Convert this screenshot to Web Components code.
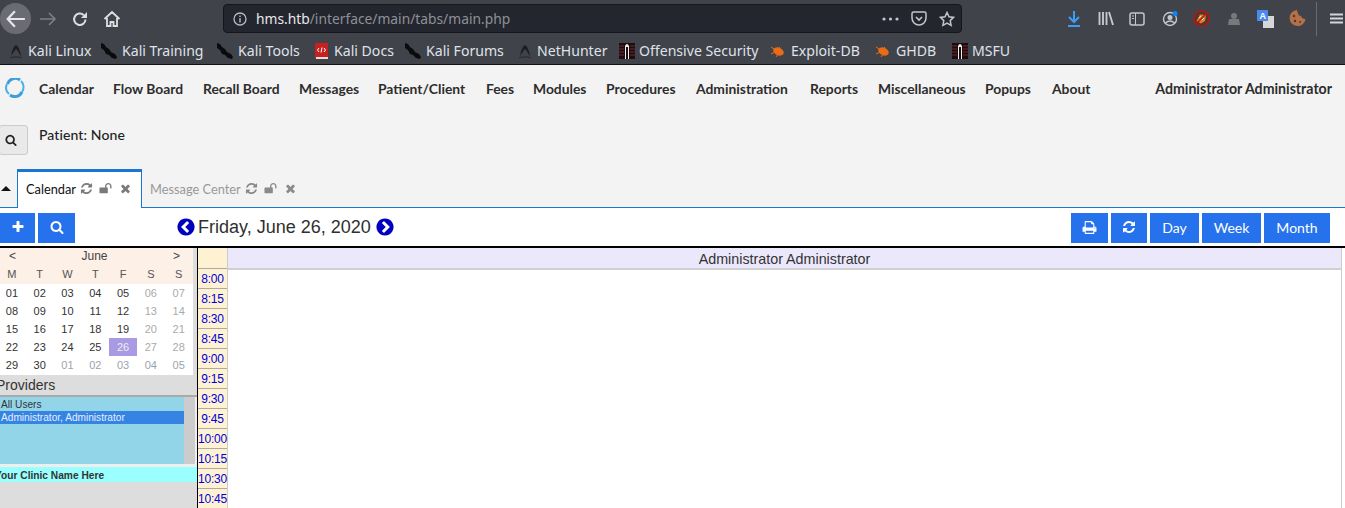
<!DOCTYPE html>
<html>
<head>
<meta charset="utf-8">
<title>OpenEMR</title>
<style>
html,body{margin:0;padding:0;height:508px;overflow:hidden;background:#fff;}
body{font-family:"Liberation Sans",sans-serif;}
</style>
</head>
<body>
<browser-bar></browser-bar>
<bookmark-bar>
  <book-mark icon="kali" w="92" gap="4">Kali Linux</book-mark>
  <book-mark icon="sword" w="116" gap="4">Kali Training</book-mark>
  <book-mark icon="sword" w="98" gap="4">Kali Tools</book-mark>
  <book-mark icon="docs" w="90" gap="5">Kali Docs</book-mark>
  <book-mark icon="sword" w="113" gap="4">Kali Forums</book-mark>
  <book-mark icon="kali" w="102" gap="4">NetHunter</book-mark>
  <book-mark icon="offsec" w="151" gap="4">Offensive Security</book-mark>
  <book-mark icon="bug" w="105" gap="6">Exploit-DB</book-mark>
  <book-mark icon="bug" w="77" gap="6">GHDB</book-mark>
  <book-mark icon="offsec" w="70" gap="4">MSFU</book-mark>
</bookmark-bar>
<emr-menu></emr-menu>
<patient-bar></patient-bar>
<emr-tabs></emr-tabs>
<cal-toolbar></cal-toolbar>
<cal-body>
  <cal-side slot="side"></cal-side>
  <day-view slot="main"></day-view>
</cal-body>

<script>
const FA = {
  search: "M1216 832q0-185-131.5-316.5t-316.5-131.5-316.5 131.5-131.5 316.5 131.5 316.5 316.5 131.5 316.5-131.5 131.5-316.5zm512 832q0 52-38 90t-90 38q-54 0-90-38l-343-342q-179 124-399 124-143 0-273.5-55.5t-225-150-150-225-55.5-273.5 55.5-273.5 150-225 225-150 273.5-55.5 273.5 55.5 225 150 150 225 55.5 273.5q0 220-124 399l343 343q37 37 37 90z",
  times: "M1490 1322q0 40-28 68l-136 136q-28 28-68 28t-68-28l-294-294-294 294q-28 28-68 28t-68-28l-136-136q-28-28-28-68t28-68l294-294-294-294q-28-28-28-68t28-68l136-136q28-28 68-28t68 28l294 294 294-294q28-28 68-28t68 28l136 136q28 28 28 68t-28 68l-294 294 294 294q28 28 28 68z",
  plus: "M1600 736v192q0 40-28 68t-68 28h-416v416q0 40-28 68t-68 28h-192q-40 0-68-28t-28-68v-416h-416q-40 0-68-28t-28-68v-192q0-40 28-68t68-28h416v-416q0-40 28-68t68-28h192q40 0 68 28t28 68v416h416q40 0 68 28t28 68z",
  refresh: "M1639 1056q0 5-1 7-64 268-268 434.5t-478 166.5q-146 0-282.5-55t-243.5-157l-129 129q-19 19-45 19t-45-19-19-45v-448q0-26 19-45t45-19h448q26 0 45 19t19 45-19 45l-137 137q71 66 161 102t187 36q134 0 250-65t186-179q11-17 53-117 8-23 30-23h192q13 0 22.5 9.5t9.5 22.5zm25-800v448q0 26-19 45t-45 19h-448q-26 0-45-19t-19-45 19-45l138-138q-148-137-349-137-134 0-250 65t-186 179q-11 17-53 117-8 23-30 23h-199q-13 0-22.5-9.5t-9.5-22.5v-7q65-268 270-434.5t480-166.5q146 0 284 55.5t245 156.5l130-129q19-19 45-19t45 19 19 45z",
  unlock: "M1728 576v256q0 26-19 45t-45 19h-64q-26 0-45-19t-19-45v-256q0-106-75-181t-181-75-181 75-75 181v192h96q40 0 68 28t28 68v576q0 40-28 68t-68 28h-960q-40 0-68-28t-28-68v-576q0-40 28-68t68-28h672v-192q0-185 131.5-316.5t316.5-131.5 316.5 131.5 131.5 316.5z",
  print: "M448 1536h896v-256h-896v256zm0-640h896v-384h-160q-40 0-68-28t-28-68v-160h-640v640zm1152 64q0-26-19-45t-45-19-45 19-19 45 19 45 45 19 45-19 19-45zm128 0v416q0 13-9.5 22.5t-22.5 9.5h-224v160q0 40-28 68t-68 28h-960q-40 0-68-28t-28-68v-160h-224q-13 0-22.5-9.5t-9.5-22.5v-416q0-79 56.5-135.5t135.5-56.5h64v-544q0-40 28-68t68-28h672q40 0 88 20t76 48l152 152q28 28 48 76t20 88v256h64q79 0 135.5 56.5t56.5 135.5z",
  left: "M1037 1395l102-102q19-19 19-45t-19-45l-307-307 307-307q19-19 19-45t-19-45l-102-102q-19-19-45-19t-45 19l-454 454q-19 19-19 45t19 45l454 454q19 19 45 19t45-19zm627-499q0 209-103 385.5t-279.5 279.5-385.5 103-385.5-103-279.5-279.5-103-385.5 103-385.5 279.5-279.5 385.5-103 385.5 103 279.5 279.5 103 385.5z",
  right: "M845 1395l454-454q19-19 19-45t-19-45l-454-454q-19-19-45-19t-45 19l-102 102q-19 19-19 45t19 45l307 307-307 307q-19 19-19 45t19 45l102 102q19 19 45 19t45-19zm819-499q0 209-103 385.5t-279.5 279.5-385.5 103-385.5-103-279.5-279.5-103-385.5 103-385.5 279.5-279.5 385.5-103 385.5 103 279.5 279.5 103 385.5z"
};
function fa(name, size, color) {
  return `<svg width="${size}" height="${size}" viewBox="0 0 1792 1792" style="display:block;flex:none"><path fill="${color}" d="${FA[name]}"/></svg>`;
}

const BOOK_ICONS = {
  kali: `<svg width="16" height="16" viewBox="0 0 16 16"><path d="M2 15c2-1 4-1 6-1s4 0 6 1" stroke="#23252a" fill="none"/><path d="M3 13c1-5 2-9 5-11 3 2 4 6 5 11-2-2-3-6-5-7-1 1-3 4-5 7z" fill="#1c1d21"/></svg>`,
  sword: `<svg width="18" height="16" viewBox="0 0 18 16"><path d="M1 0l3 1 2 3 3 2 2 3 4 2 2 3-1 2-4-1-3-3-3-1-2-4-3-2z" fill="#0b0b0d"/></svg>`,
  docs: `<svg width="15" height="16" viewBox="0 0 15 16"><rect x="1" y="0" width="13" height="15" rx="1" fill="#c8201f"/><rect x="2" y="14" width="12" height="2" fill="#e8dcdc"/><path d="M5 5L3.500 7 5 9M10 5l1.500 2L10 9M8 4.500L7 9.500" stroke="#fff" fill="none"/></svg>`,
  offsec: `<svg width="16" height="16" viewBox="0 0 16 16"><rect width="16" height="16" fill="#1d0d0f"/><path d="M0 3h5M0 6h5M0 9h5M0 12h5M11 3h5M11 6h5M11 9h5M11 12h5" stroke="#6e2a2c"/><path d="M6 16V3q2-4 4 0v13H9V4H7v12z" fill="#eee"/></svg>`,
  bug: `<svg width="15" height="14" viewBox="0 0 15 14"><ellipse cx="8.500" cy="7.500" rx="5.500" ry="3.800" transform="rotate(25 8.500 7.500)" fill="#ea6a16"/><path d="M1 3l4 2.500M1 10l4-2M6 13l2-3M10 3L8 5" stroke="#ea6a16"/></svg>`
};

class BrowserBar extends HTMLElement {
  constructor() {
    super();
    this.attachShadow({ mode: "open" });
    this.shadowRoot.innerHTML = `
<style>
:host{display:flex;align-items:center;height:37px;background:#41434b;}
.nav{display:flex;align-items:center;width:223px;flex:none;}
.back{width:31px;height:31px;border-radius:50%;background:#6b6c73;display:flex;align-items:center;justify-content:center;flex:none;}
.fwd{margin-left:8px;}
.reload{margin-left:15px;}
.home{margin-left:15px;}
svg{display:block;flex:none;}
.url{width:739px;height:29px;box-sizing:border-box;background:#24262f;border:1px solid #15161b;border-radius:4px;display:flex;align-items:center;font:13.800px "Noto Sans",sans-serif;color:#8e9097;flex:none;padding:0 6px 0 9px;}
.url b{font-weight:400;color:#e8e8ea;}
.path{flex:1;margin-left:9px;}
.tools{flex:1;display:flex;align-items:center;padding-left:105px;}
.sep{width:1px;height:34px;background:#6a6c72;margin:0 13px 0 10px;}
</style>
<div class="nav">
  <div class="back"><svg width="20" height="20" viewBox="0 0 18 18"><path d="M8 2L1.500 9 8 16M2 9h15" stroke="#e6e6e8" stroke-width="2" fill="none"/></svg></div>
  <svg class="fwd" width="18" height="18" viewBox="0 0 18 18"><path d="M10 3l6 6-6 6M16 9H1" stroke="#7d7f85" stroke-width="1.600" fill="none"/></svg>
  <svg class="reload" width="16" height="16" viewBox="0 0 16 16"><path d="M13.500 8.500a5.700 5.700 0 1 1-1.700-4.300" stroke="#dedfe1" stroke-width="2" fill="none"/><path d="M15 1v6H9z" fill="#dedfe1"/></svg>
  <svg class="home" width="18" height="18" viewBox="0 0 18 18"><path d="M1.500 9L9 2l7.500 7M4 8v8h3.500v-4h3v4H14V8" stroke="#dedfe1" stroke-width="1.800" fill="none"/></svg>
</div>
<div class="url">
  <svg width="14" height="14" viewBox="0 0 14 14"><circle cx="7" cy="7" r="6" stroke="#b9bac0" stroke-width="1.300" fill="none"/><path d="M7 6v4.500M7 3.500v1.500" stroke="#b9bac0" stroke-width="1.400"/></svg>
  <span class="path"><b>hms.htb</b>/interface/main/tabs/main.php</span>
  <svg width="17" height="4" viewBox="0 0 17 4"><circle cx="2" cy="2" r="1.600" fill="#c4c5c9"/><circle cx="8.500" cy="2" r="1.600" fill="#c4c5c9"/><circle cx="15" cy="2" r="1.600" fill="#c4c5c9"/></svg>
  <svg style="margin-left:12px" width="16" height="15" viewBox="0 0 16 15"><path d="M1 2.500Q1 1 2.500 1h11Q15 1 15 2.500V7a7 7 0 0 1-14 0z" stroke="#c4c5c9" stroke-width="1.500" fill="none"/><path d="M5 6l3 3 3-3" stroke="#c4c5c9" stroke-width="1.600" fill="none"/></svg>
  <svg style="margin-left:12px" width="16" height="16" viewBox="0 0 16 16"><path d="M8 1.500l2 4.300 4.600.6-3.400 3.200.9 4.700L8 12l-4.100 2.300.9-4.700L1.400 6.400 6 5.800z" stroke="#c4c5c9" stroke-width="1.500" fill="none"/></svg>
</div>
<div class="tools">
  <svg width="14" height="16" viewBox="0 0 14 16"><path d="M7 0v11M2 6l5 5 5-5M1 15h12" stroke="#3e9cf5" stroke-width="2" fill="none"/></svg>
  <svg style="margin-left:17px" width="16" height="15" viewBox="0 0 16 15"><path d="M1.500 1v13M5 1v13M8.500 1v13M11 1l4 13" stroke="#c6c7ca" stroke-width="1.900" fill="none"/></svg>
  <svg style="margin-left:15px" width="16" height="14" viewBox="0 0 16 14"><rect x="1" y="1" width="14" height="12" rx="2" stroke="#c6c7ca" stroke-width="1.500" fill="none"/><path d="M6.500 1v12M3 4h2M3 6.500h2" stroke="#c6c7ca"/></svg>
  <svg style="margin-left:17px" width="16" height="16" viewBox="0 0 16 16"><circle cx="8" cy="8" r="6.500" stroke="#c6c7ca" stroke-width="1.400" fill="none"/><circle cx="8" cy="6.500" r="2.500" fill="#c6c7ca"/><path d="M3.500 12q4.500-4 9 0" stroke="#c6c7ca" stroke-width="1.600" fill="none"/><circle cx="13" cy="2.500" r="2.500" fill="#0a84ff"/></svg>
  <svg style="margin-left:15px" width="17" height="17" viewBox="0 0 17 17"><circle cx="8.500" cy="8.500" r="7.500" fill="#4a3a30" stroke="#b81414" stroke-width="1.600"/><path d="M3.500 11L7 4.500l6 .5-1 6-4 2.500z" fill="#d8842c"/><path d="M6 8l2-2M9 10l2-2" stroke="#f4e4c8"/><path d="M3 14L14 3" stroke="#b81414" stroke-width="1.400"/></svg>
  <svg style="margin-left:17px" width="14" height="14" viewBox="0 0 14 14"><circle cx="7" cy="4" r="3" fill="#77797d"/><path d="M1 13l1-6h10l1 6z" fill="#77797d"/></svg>
  <svg style="margin-left:16px" width="17" height="18" viewBox="0 0 17 18"><rect x="6" y="6" width="11" height="12" fill="#d6d7d8"/><rect width="11" height="11" fill="#4a8af0"/><text x="2.500" y="9" font-size="9" font-weight="700" font-family="Liberation Sans" fill="#fff">A</text></svg>
  <svg style="margin-left:15px" width="17" height="17" viewBox="0 0 17 17"><path d="M8 0a8 8 0 1 0 8.500 9Q13 9 12 6 9 5.500 9 3 8 2 8 0z" fill="#b3714a"/><circle cx="5" cy="6" r="1.200" fill="#5c3320"/><circle cx="6" cy="11" r="1.200" fill="#5c3320"/><circle cx="11" cy="12" r="1" fill="#5c3320"/></svg>
  <span class="sep"></span>
  <svg width="13" height="11" viewBox="0 0 13 11"><path d="M0 1.500h13M0 5.500h13M0 9.500h13" stroke="#d4d5d7" stroke-width="2"/></svg>
</div>`;
  }
}
customElements.define("browser-bar", BrowserBar);

class BookmarkBar extends HTMLElement {
  constructor() {
    super();
    this.attachShadow({ mode: "open" });
    this.shadowRoot.innerHTML = `
<style>
:host{display:flex;align-items:center;height:28px;box-sizing:border-box;padding-left:8px;background:#41434b;border-bottom:1px solid #101114;font:14.100px "Noto Sans",sans-serif;color:#dfe2e8;white-space:nowrap;}
</style>
<slot></slot>`;
  }
}
customElements.define("bookmark-bar", BookmarkBar);

class BookMark extends HTMLElement {
  constructor() {
    super();
    this.attachShadow({ mode: "open" });
    const icon = BOOK_ICONS[this.getAttribute("icon")];
    this.shadowRoot.innerHTML = `
<style>
:host{display:flex;align-items:center;flex:none;width:${this.getAttribute("w")}px;}
span{display:flex;margin-right:${this.getAttribute("gap")}px;}
</style>
<span>${icon}</span><slot></slot>`;
  }
}
customElements.define("book-mark", BookMark);

class EmrMenu extends HTMLElement {
  constructor() {
    super();
    this.attachShadow({ mode: "open" });
    const items = [["Calendar",74],["Flow Board",90],["Recall Board",96],["Messages",79],["Patient/Client",108],["Fees",47],["Modules",73],["Procedures",90],["Administration",114],["Reports",68],["Miscellaneous",107],["Popups",67],["About",60]];
    this.shadowRoot.innerHTML = `
<style>
:host{display:flex;align-items:center;height:46px;background:#f3f3f3;font:700 13.860px Lato,sans-serif;color:#2d2d2d;padding-left:5px;white-space:nowrap;}
svg{display:block;margin-right:14px;flex:none;}
nav{display:flex;flex:1;}
nav span{flex:none;}
.user{margin-right:13px;font-size:14.150px;}
</style>
<svg width="20" height="20" viewBox="0 0 20 20"><path d="M2.500 6a8 8 0 0 1 12.500-4" stroke="#3ca0dc" stroke-width="3" fill="none"/><path d="M16 3a8.500 8.500 0 0 1 1 11" stroke="#49b0e4" stroke-width="2" fill="none"/><path d="M17 14a8 8 0 0 1-12 3" stroke="#3ca0dc" stroke-width="3" fill="none"/><path d="M4 16a8.500 8.500 0 0 1-2-10" stroke="#49b0e4" stroke-width="2" fill="none"/></svg>
<nav>${items.map(i => `<span style="width:${i[1]}px">${i[0]}</span>`).join("")}</nav>
<span class="user">Administrator Administrator</span>`;
  }
}
customElements.define("emr-menu", EmrMenu);

class PatientBar extends HTMLElement {
  constructor() {
    super();
    this.attachShadow({ mode: "open" });
    this.shadowRoot.innerHTML = `
<style>
:host{display:flex;height:58px;background:#f3f3f3;font:500 14px Lato,sans-serif;color:#222;box-sizing:border-box;padding-top:14px;}
.btn{width:29px;height:30px;box-sizing:border-box;margin-left:-1px;padding-right:5px;background:#e9e9e9;border:1px solid #ccc;border-radius:3px;display:flex;align-items:center;justify-content:center;}
p{margin:1px 0 0 11px;letter-spacing:.1px;}
</style>
<div class="btn">${fa("search", 12, "#222")}</div>
<p>Patient: None</p>`;
  }
}
customElements.define("patient-bar", PatientBar);

class TabItem extends HTMLElement {
  constructor() {
    super();
    this.attachShadow({ mode: "open" });
    const c = this.hasAttribute("active") ? "#7a7a7a" : "#8a8a8a";
    this.shadowRoot.innerHTML = `
<style>
:host{display:flex;align-items:center;box-sizing:border-box;height:39px;padding:0 8px;gap:4px;color:#999;white-space:nowrap;}
:host([active]){width:125px;flex:none;background:#fff;color:#111;border:1px solid #1976d2;border-top:3px solid #1976d2;border-bottom:none;padding:0 0 3px 8px;}
.ic{display:flex;gap:6px;align-items:center;}
.x{margin-left:1px;}
</style>
<slot></slot>
<div class="ic">${fa("refresh", 13, c)}${fa("unlock", 13, c)}<span class="x">${fa("times", 13, c)}</span></div>`;
  }
}
customElements.define("tab-item", TabItem);

class EmrTabs extends HTMLElement {
  constructor() {
    super();
    this.attachShadow({ mode: "open" });
    this.shadowRoot.innerHTML = `
<style>
:host{display:flex;align-items:flex-end;height:39px;background:#f3f3f3;font:400 12.800px Lato,sans-serif;}
.caret{width:17px;height:38px;display:flex;align-items:center;justify-content:center;box-sizing:border-box;padding:0 5px 0 0;border-bottom:1px solid #1976d2;}
.rest{flex:1;height:100%;box-sizing:border-box;border-bottom:1px solid #1976d2;display:flex;}
svg{display:block;}
</style>
<div class="caret"><svg width="10" height="5" viewBox="0 0 10 5"><path d="M0 5L5 0l5 5z" fill="#111"/></svg></div>
<tab-item active>Calendar</tab-item>
<div class="rest"><tab-item>Message Center</tab-item></div>`;
  }
}
customElements.define("emr-tabs", EmrTabs);

class CalToolbar extends HTMLElement {
  constructor() {
    super();
    this.attachShadow({ mode: "open" });
    this.shadowRoot.innerHTML = `
<style>
:host{display:flex;height:40px;box-sizing:border-box;padding-top:5px;background:#fff;font:400 14px Lato,sans-serif;border-bottom:2px solid #000;}
.b{height:30px;padding-bottom:2px;box-sizing:border-box;background:#2672ec;color:#fff;display:flex;align-items:center;justify-content:center;flex:none;margin-right:3px;}
.left{display:flex;width:176px;flex:none;}
.date{flex:1;display:flex;align-items:center;height:28px;gap:2px;font:18px "Liberation Sans",sans-serif;color:#2f2f2f;}
.date svg:last-child{margin-left:2px;}
.right{display:flex;padding-right:12px;}
</style>
<div class="left">
  <div class="b" style="width:35px">${fa("plus", 14, "#fff")}</div>
  <div class="b" style="width:37px">${fa("search", 14, "#fff")}</div>
</div>
<div class="date">${fa("left", 20, "#0000c0")}<span>Friday, June 26, 2020</span>${fa("right", 20, "#0000c0")}</div>
<div class="right">
  <div class="b" style="width:37px">${fa("print", 15, "#fff")}</div>
  <div class="b" style="width:36px">${fa("refresh", 14, "#fff")}</div>
  <div class="b" style="width:49px">Day</div>
  <div class="b" style="width:59px">Week</div>
  <div class="b" style="width:66px">Month</div>
</div>`;
  }
}
customElements.define("cal-toolbar", CalToolbar);

class CalBody extends HTMLElement {
  constructor() {
    super();
    this.attachShadow({ mode: "open" });
    this.shadowRoot.innerHTML = `
<style>
:host{display:flex;height:260px;overflow:hidden;background:#fff;}
</style>
<slot name="side"></slot><slot name="main"></slot>`;
  }
}
customElements.define("cal-body", CalBody);

class MiniCal extends HTMLElement {
  constructor() {
    super();
    this.attachShadow({ mode: "open" });
    const head = ["M","T","W","T","F","S","S"];
    const days = [];
    for (let i = 1; i <= 30; i++) days.push({ t: String(i).padStart(2, "0"), off: false });
    for (let i = 1; i <= 5; i++) days.push({ t: "0" + i, off: true });
    const cells = days.map((d, i) => {
      const wk = i % 7 > 4;
      let cls = d.off ? "out" : wk ? "wk" : "";
      if (d.t === "26" && !d.off) cls = "sel";
      return `<div class="d ${cls}">${d.t}</div>`;
    }).join("");
    this.shadowRoot.innerHTML = `
<style>
:host{display:block;width:195px;margin-left:-2px;font:11px "Liberation Sans",sans-serif;color:#333;background:#fff;}
.top{background:#fdf0e6;height:36px;}
.mon{display:flex;justify-content:space-between;height:16px;align-items:center;padding:0 13px 0 11px;font-size:12px;color:#444;}
.g{display:grid;grid-template-columns:repeat(7,27.800px);}
.g.h div{height:20px;line-height:20px;text-align:center;color:#555;}
.d{height:18px;line-height:18px;text-align:center;color:#333;}
.wk{color:#aaa;}
.d.out{color:#9aa4ad;}
.sel{background:#a99be3;color:#eee;}
</style>
<div class="top">
  <div class="mon"><span>&lt;</span><span>June</span><span>&gt;</span></div>
  <div class="g h">${head.map(h => `<div>${h}</div>`).join("")}</div>
</div>
<div class="g">${cells}</div>`;
  }
}
customElements.define("mini-cal", MiniCal);

class CalSide extends HTMLElement {
  constructor() {
    super();
    this.attachShadow({ mode: "open" });
    this.shadowRoot.innerHTML = `
<style>
:host{display:block;width:197px;flex:none;background:#ddd;overflow:hidden;height:100%;font-family:"Liberation Sans",sans-serif;}
.cal{display:flex;height:127px;overflow:hidden;}
.prov{height:22px;box-sizing:border-box;margin-left:-4px;font-size:14px;line-height:20px;color:#333;border-bottom:2px solid #aaa;}
.list{display:flex;height:70px;background:#eee;}
.opts{width:184px;height:67px;background:#93d5e8;font-size:10.150px;color:#333;line-height:13px;padding-top:1px;box-sizing:border-box;}
.opts div{padding-left:1px;height:13px;}
.opts .on{background:#3584e4;color:#e8eefc;}
.sb{width:11px;height:67px;background:#ccc;}
.clinic{height:15px;line-height:17px;background:#99ffff;font-size:10.200px;font-weight:700;color:#333;overflow:hidden;}
.clinic span{margin-left:-5px;display:inline-block;}
</style>
<div class="cal"><mini-cal></mini-cal></div>
<div class="prov">Providers</div>
<div class="list">
  <div class="opts"><div>All Users</div><div class="on">Administrator, Administrator</div></div>
  <div class="sb"></div>
</div>
<div class="clinic"><span>Your Clinic Name Here</span></div>`;
  }
}
customElements.define("cal-side", CalSide);

class DayView extends HTMLElement {
  constructor() {
    super();
    this.attachShadow({ mode: "open" });
    const times = [];
    for (let h = 8; h <= 10; h++) for (const m of ["00","15","30","45"]) times.push(`${h}:${m}`);
    this.shadowRoot.innerHTML = `
<style>
:host{display:flex;flex:1;height:100%;overflow:hidden;border-left:1px solid #000;font-family:"Liberation Sans",sans-serif;}
.times{width:30px;flex:none;background:#fff2d2;padding-top:20px;box-sizing:border-box;border-right:1px solid #ccc;}
.t{height:20px;box-sizing:border-box;border-top:1px solid #aaa;font-size:12px;color:#0000e0;text-align:center;line-height:20px;white-space:nowrap;letter-spacing:-.2px;}
.col{flex:1;margin-right:3px;border-right:1px solid #ccc;}
.hd{height:22px;box-sizing:border-box;background:#ebe8fc;border-bottom:2px solid #d0d0d0;text-align:center;font-size:14.300px;line-height:22px;color:#333;}
</style>
<div class="times">${times.map(t => `<div class="t">${t}</div>`).join("")}</div>
<div class="col"><div class="hd">Administrator Administrator</div></div>`;
  }
}
customElements.define("day-view", DayView);
</script>
</body>
</html>
